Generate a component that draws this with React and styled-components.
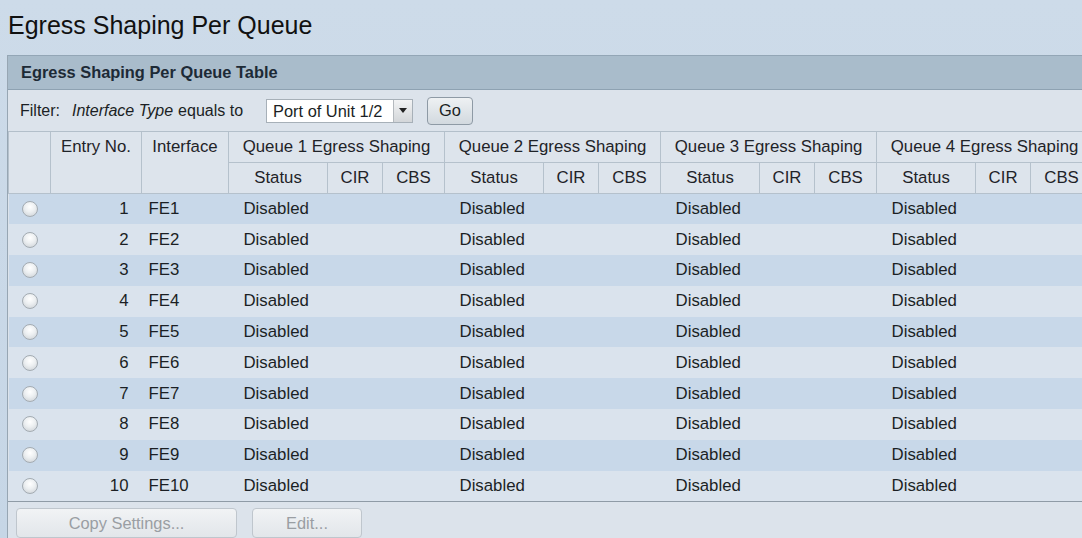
import React from 'react';
import styled, { createGlobalStyle } from 'styled-components';

const GlobalStyle = createGlobalStyle`
  html, body {
    margin: 0;
    padding: 0;
    overflow: hidden;
  }
  body {
    background: linear-gradient(180deg, #cddbe9 0%, #c6d6e6 100%);
    font-family: "Liberation Sans", Arial, sans-serif;
    color: #1b1f24;
  }
`;

const Page = styled.div`
  width: 1082px;
  height: 538px;
  padding-left: 7px;
  box-sizing: border-box;
  overflow: hidden;
`;

const Title = styled.h1`
  margin: 12px 0 17px 1px;
  height: 26px;
  line-height: 26px;
  font-size: 25px;
  font-weight: normal;
  color: #111;
  white-space: nowrap;
`;

const Panel = styled.div`
  width: 1100px;
  border-left: 1px solid #97a6b3;
  border-top: 1px solid #93a6b6;
  background: #dce3eb;
`;

const PanelHeader = styled.div`
  height: 33px;
  line-height: 33px;
  padding-left: 13px;
  background: #a9bccb;
  border-bottom: 1px solid #8ea2b2;
  font-size: 16.4px;
  font-weight: bold;
  color: #1d2a36;
`;

const FilterBar = styled.div`
  height: 42px;
  display: flex;
  align-items: center;
  padding-left: 12px;
  font-size: 16px;
  background: #dce3eb;
  border-bottom: 1px solid #b3bfca;
  box-sizing: border-box;
`;

const FilterLabel = styled.span`
  margin-right: 12px;
`;

const FieldName = styled.em`
  font-style: italic;
  margin-right: 5px;
`;

const SelectBox = styled.div`
  display: flex;
  align-items: stretch;
  width: 147px;
  height: 24px;
  margin-left: 23px;
  background: #fff;
  border: 1px solid #a7b0b8;
  box-sizing: border-box;
  font-size: 16.4px;
`;

const SelectValue = styled.span`
  flex: 1;
  line-height: 22px;
  padding-left: 6px;
  white-space: nowrap;
  overflow: hidden;
`;

const ArrowBox = styled.span`
  width: 18px;
  display: flex;
  align-items: center;
  justify-content: center;
  background: linear-gradient(180deg, #f2f3f4 0%, #d3d6d9 100%);
  border-left: 1px solid #b4b9be;

  &::after {
    content: '';
    border-left: 4px solid transparent;
    border-right: 4px solid transparent;
    border-top: 5px solid #222;
  }
`;

const GoButton = styled.button`
  margin-left: 14px;
  width: 46px;
  height: 28px;
  border: 1px solid #8e9aa5;
  border-radius: 4px;
  background: linear-gradient(180deg, #eef1f3 0%, #d2d9df 100%);
  font-family: inherit;
  font-size: 16.4px;
  color: #1b1f24;
  padding: 0;
`;

const Table = styled.table`
  border-collapse: collapse;
  table-layout: fixed;
  width: 1084px;
  font-size: 16.8px;
`;

const HeadCell = styled.th`
  height: 30px;
  padding: 0;
  font-weight: normal;
  text-align: center;
  vertical-align: ${p => (p.$top ? 'top' : 'middle')};
  line-height: 30px;
  white-space: nowrap;
  background: #dde4ec;
  border: 1px solid #b5c1cc;
  border-top: none;
  color: #1f2328;
`;

const Row = styled.tr`
  height: 30.8px;
  background: ${p => (p.$alt ? '#dae3ed' : '#c8d8e9')};
`;

const Cell = styled.td`
  padding: 0 ${p => (p.$right ? '13px' : '0')} 0 ${p => p.$indent || 0}px;
  text-align: ${p => (p.$right ? 'right' : 'left')};
  white-space: nowrap;
  vertical-align: middle;
`;

const Radio = styled.span`
  display: block;
  width: 14px;
  height: 14px;
  margin-left: 13px;
  border-radius: 50%;
  border: 1px solid #a3abb2;
  background: radial-gradient(circle at 50% 35%, #ffffff 0%, #eceff1 45%, #c9ced3 100%);
`;

const TableFoot = styled.div`
  border-top: 1px solid #8f9ba6;
  height: 40px;
  display: flex;
  align-items: flex-start;
  gap: 15px;
  padding: 6px 0 0 8px;
  box-sizing: border-box;
  background: #dce3eb;
`;

const ActionButton = styled.button`
  width: ${p => p.$width}px;
  height: 30px;
  border: 1px solid #bfc6cd;
  border-radius: 4px;
  background: linear-gradient(180deg, #f1f3f5 0%, #e2e6ea 100%);
  font-family: inherit;
  font-size: 16.4px;
  color: #9a9ea3;
  padding: 0;
`;

const queues = [1, 2, 3, 4];
const ports = Array.from({ length: 10 }, (_, i) => ({ no: i + 1, name: `FE${i + 1}` }));

export default function App() {
  return (
    <>
      <GlobalStyle />
      <Page>
        <Title>Egress Shaping Per Queue</Title>
        <Panel>
          <PanelHeader>Egress Shaping Per Queue Table</PanelHeader>
          <FilterBar>
            <FilterLabel>Filter:</FilterLabel>
            <FieldName>Interface Type</FieldName>
            <span>equals to</span>
            <SelectBox>
              <SelectValue>Port of Unit 1/2</SelectValue>
              <ArrowBox />
            </SelectBox>
            <GoButton type="button">Go</GoButton>
          </FilterBar>
          <Table>
            <colgroup>
              <col style={{ width: 42 }} />
              <col style={{ width: 91 }} />
              <col style={{ width: 87 }} />
              {queues.map(q => (
                <React.Fragment key={q}>
                  <col style={{ width: 99 }} />
                  <col style={{ width: 55 }} />
                  <col style={{ width: 62 }} />
                </React.Fragment>
              ))}
            </colgroup>
            <thead>
              <tr>
                <HeadCell rowSpan={2} $top />
                <HeadCell rowSpan={2} $top>Entry No.</HeadCell>
                <HeadCell rowSpan={2} $top>Interface</HeadCell>
                {queues.map(q => (
                  <HeadCell key={q} colSpan={3}>Queue {q} Egress Shaping</HeadCell>
                ))}
              </tr>
              <tr>
                {queues.map(q => (
                  <React.Fragment key={q}>
                    <HeadCell>Status</HeadCell>
                    <HeadCell>CIR</HeadCell>
                    <HeadCell>CBS</HeadCell>
                  </React.Fragment>
                ))}
              </tr>
            </thead>
            <tbody>
              {ports.map((p, i) => (
                <Row key={p.no} $alt={i % 2 === 1}>
                  <Cell><Radio /></Cell>
                  <Cell $right>{p.no}</Cell>
                  <Cell $indent={7}>{p.name}</Cell>
                  {queues.map(q => (
                    <React.Fragment key={q}>
                      <Cell $indent={15}>Disabled</Cell>
                      <Cell />
                      <Cell />
                    </React.Fragment>
                  ))}
                </Row>
              ))}
            </tbody>
          </Table>
          <TableFoot>
            <ActionButton type="button" $width={221} disabled>Copy Settings...</ActionButton>
            <ActionButton type="button" $width={110} disabled>Edit...</ActionButton>
          </TableFoot>
        </Panel>
      </Page>
    </>
  );
}
